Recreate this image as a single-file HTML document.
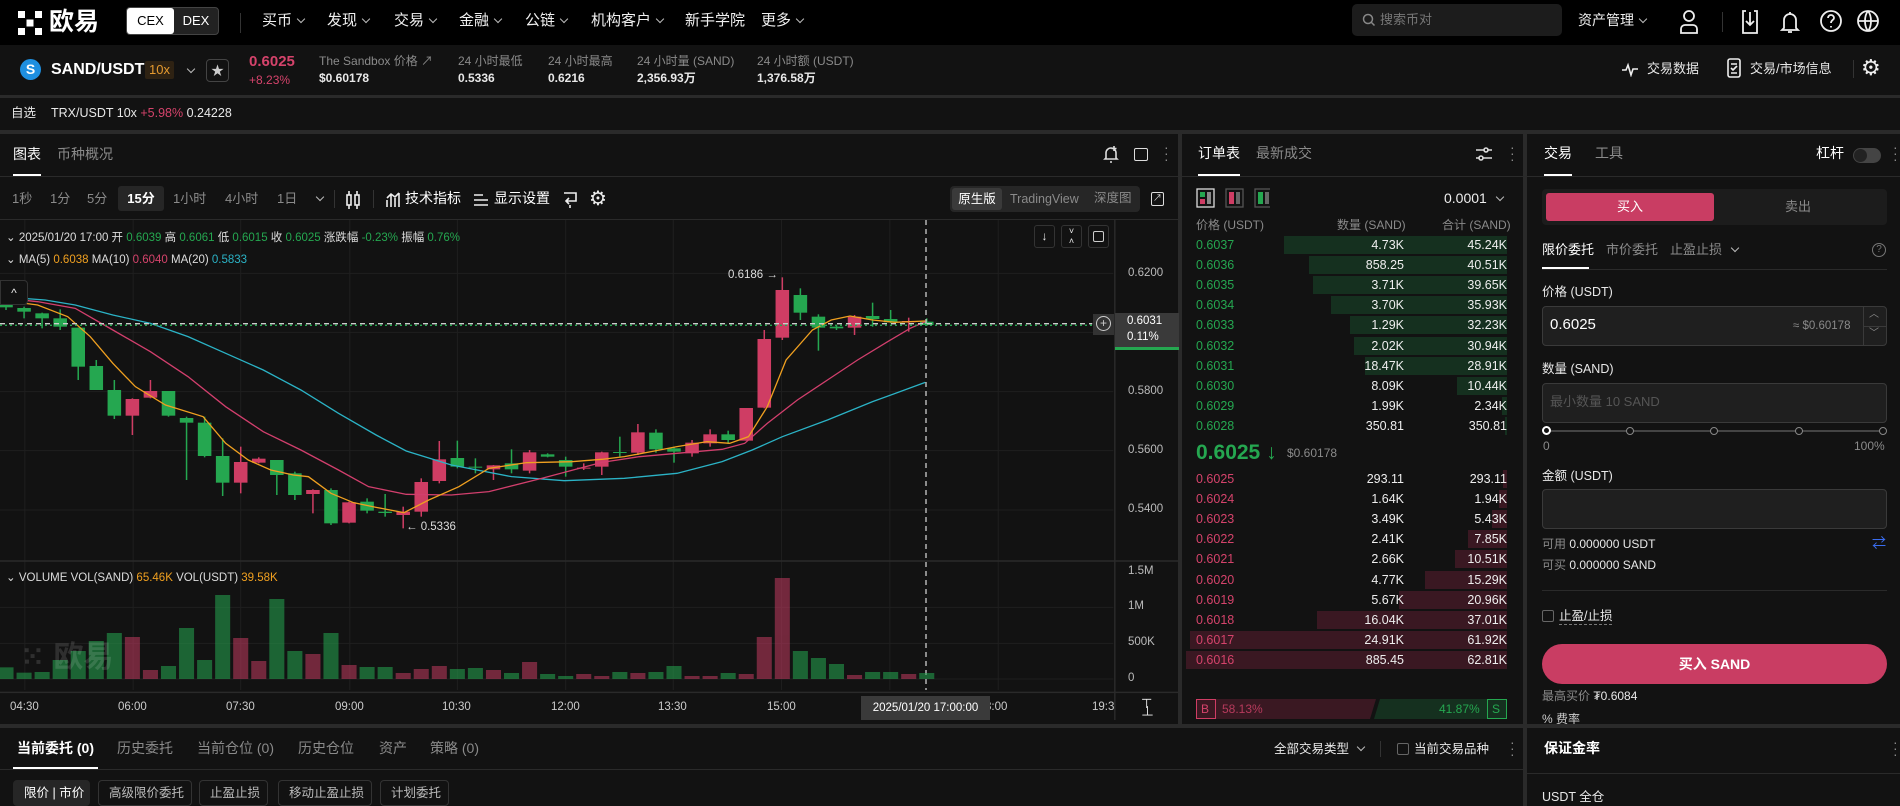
<!DOCTYPE html>
<html><head><meta charset="utf-8">
<style>
*{margin:0;padding:0;box-sizing:border-box}
body{width:1900px;height:806px;overflow:hidden;background:#121212;color:#e8e8e8;font-family:"Liberation Sans","Noto Sans CJK SC",sans-serif;font-size:12px;position:relative;line-height:1.2}
.a{position:absolute;white-space:nowrap}
.g{color:#8a8a8a}
.gr{color:#25a750}.rd{color:#d5436b}
.nav{left:0;top:0;width:1900px;height:45px;background:#000}
.ni{top:12px;font-size:15px;color:#f0f0f0}
.chev{display:inline-block;width:6px;height:6px;border-right:1.3px solid #bbb;border-bottom:1.3px solid #bbb;transform:rotate(45deg);margin-left:6px;position:relative;top:-3px}
.sep{background:#2a2a2a}
.ob{left:1180px;width:344px;height:18px}
.ob span{position:absolute;top:2px;font-size:12.5px}
.ob .p{left:16px}.ob .q{right:120px;color:#eee}.ob .t{right:17px;color:#eee}
.ob i{position:absolute;top:0;height:18px;right:17px}
.btn{top:780px;height:26px;border:1px solid #333;border-radius:4px;color:#bbb;font-size:12.5px;padding:5px 10px 0}
.inp{left:1542px;width:345px;height:40px;background:#1f1f1f;border:1px solid #3a3a3a;border-radius:4px}
</style></head><body>

<!-- NAV -->
<div class="a nav"></div>
<svg class="a" style="left:18px;top:11px" width="24" height="24" viewBox="0 0 24 24" fill="#fff"><rect x="0" y="0" width="7" height="7"/><rect x="17" y="0" width="7" height="7"/><rect x="8.5" y="8.5" width="7" height="7"/><rect x="0" y="17" width="7" height="7"/><rect x="17" y="17" width="7" height="7"/></svg>
<div class="a" style="left:49px;top:7px;font-size:25px;font-weight:bold;color:#fff">欧易</div>
<div class="a" style="left:126px;top:7px;width:93px;height:28px;border:1px solid #444;border-radius:4px;background:#222"></div>
<div class="a" style="left:127px;top:8px;width:47px;height:26px;background:#fff;border-radius:3px;color:#000;font-size:13px;text-align:center;line-height:26px">CEX</div>
<div class="a" style="left:174px;top:8px;width:44px;height:26px;color:#fff;font-size:13px;text-align:center;line-height:26px">DEX</div>
<div class="a" style="left:240px;top:13px;width:1px;height:20px;background:#333"></div>
<div class="a ni" style="left:262px">买币<span class="chev"></span></div>
<div class="a ni" style="left:327px">发现<span class="chev"></span></div>
<div class="a ni" style="left:394px">交易<span class="chev"></span></div>
<div class="a ni" style="left:459px">金融<span class="chev"></span></div>
<div class="a ni" style="left:525px">公链<span class="chev"></span></div>
<div class="a ni" style="left:591px">机构客户<span class="chev"></span></div>
<div class="a ni" style="left:685px">新手学院</div>
<div class="a ni" style="left:761px">更多<span class="chev"></span></div>
<div class="a" style="left:1352px;top:4px;width:210px;height:32px;background:#1c1c1c;border-radius:5px"></div>
<svg class="a" style="left:1362px;top:13px" width="14" height="14" viewBox="0 0 14 14" fill="none" stroke="#888" stroke-width="1.5"><circle cx="6" cy="6" r="4.5"/><path d="M9.5 9.5l3 3"/></svg>
<div class="a" style="left:1380px;top:12px;font-size:13px;color:#777">搜索币对</div>
<div class="a ni" style="left:1578px;font-size:14px">资产管理<span class="chev"></span></div>
<svg class="a" style="left:1678px;top:9px" width="22" height="26" viewBox="0 0 22 26" fill="none" stroke="#eee" stroke-width="1.8"><circle cx="11" cy="7" r="5"/><path d="M3 24v-4a4 4 0 014-4h8a4 4 0 014 4v4z"/></svg>
<div class="a" style="left:1722px;top:12px;width:1px;height:20px;background:#333"></div>
<svg class="a" style="left:1740px;top:9px" width="20" height="26" viewBox="0 0 20 26" fill="none" stroke="#eee" stroke-width="1.8"><path d="M6 2H3v22h14V2h-3M10 3v13M6 12l4 4 4-4"/></svg>
<svg class="a" style="left:1780px;top:9px" width="20" height="26" viewBox="0 0 20 26" fill="none" stroke="#eee" stroke-width="1.8"><path d="M4 19V11a6 6 0 0112 0v8l2 2H2zM8 23h4M10 3v2"/></svg>
<svg class="a" style="left:1819px;top:9px" width="24" height="24" viewBox="0 0 24 24" fill="none" stroke="#eee" stroke-width="1.8"><circle cx="12" cy="12" r="10"/><path d="M9 9a3 3 0 116 0c0 2-3 2-3 5M12 17v1.5"/></svg>
<svg class="a" style="left:1856px;top:9px" width="24" height="24" viewBox="0 0 24 24" fill="none" stroke="#eee" stroke-width="1.8"><circle cx="12" cy="12" r="10"/><path d="M2 12h20M12 2c-4 5-4 15 0 20M12 2c4 5 4 15 0 20"/></svg>

<!-- BAR 2 -->
<div class="a" style="left:20px;top:59px;width:21px;height:21px;border-radius:50%;background:#1e8fe0;color:#fff;font-weight:bold;font-size:14px;text-align:center;line-height:21px">S</div>
<div class="a" style="left:51px;top:60px;font-size:16px;font-weight:bold;color:#fff">SAND/USDT</div>
<div class="a" style="left:145px;top:61px;width:29px;height:18px;background:#2e2213;color:#e59a2f;font-size:13px;text-align:center;line-height:18px;border-radius:2px">10x</div>
<div class="a" style="left:182px;top:64px"><span class="chev"></span></div>
<div class="a" style="left:206px;top:59px;width:23px;height:23px;border:1px solid #444;border-radius:4px;color:#ccc;text-align:center;line-height:21px;font-size:13px">★</div>
<div class="a rd" style="left:249px;top:53px;font-size:15px;font-weight:bold">0.6025</div>
<div class="a rd" style="left:249px;top:73px;font-size:12px">+8.23%</div>
<div class="a g" style="left:319px;top:54px">The Sandbox 价格 ↗</div>
<div class="a" style="left:319px;top:71px;font-weight:bold">$0.60178</div>
<div class="a g" style="left:458px;top:54px">24 小时最低</div>
<div class="a" style="left:458px;top:71px;font-weight:bold">0.5336</div>
<div class="a g" style="left:548px;top:54px">24 小时最高</div>
<div class="a" style="left:548px;top:71px;font-weight:bold">0.6216</div>
<div class="a g" style="left:637px;top:54px">24 小时量 (SAND)</div>
<div class="a" style="left:637px;top:71px;font-weight:bold">2,356.93万</div>
<div class="a g" style="left:757px;top:54px">24 小时额 (USDT)</div>
<div class="a" style="left:757px;top:71px;font-weight:bold">1,376.58万</div>
<svg class="a" style="left:1622px;top:61px" width="18" height="16" viewBox="0 0 18 16" fill="none" stroke="#eee" stroke-width="1.6"><path d="M0 9h4l2-5 3 10 2-6h5"/></svg>
<div class="a" style="left:1647px;top:61px;font-size:13px">交易数据</div>
<svg class="a" style="left:1727px;top:58px" width="14" height="20" viewBox="0 0 14 20" fill="none" stroke="#eee" stroke-width="1.6"><rect x="1" y="1" width="12" height="18" rx="2"/><path d="M4 6h6M4 10l2 2 4-4M4 15h6"/></svg>
<div class="a" style="left:1750px;top:61px;font-size:13px">交易/市场信息</div>
<div class="a" style="left:1853px;top:60px;width:1px;height:18px;background:#333"></div>
<div class="a" style="left:1861px;top:55px;font-size:22px;color:#eee">⚙</div>
<div class="a sep" style="left:0;top:95px;width:1900px;height:3px"></div>
<div class="a" style="left:11px;top:106px;font-size:12.5px">自选</div>
<div class="a" style="left:51px;top:106px;font-size:12.5px">TRX/USDT 10x <span class="rd">+5.98%</span> 0.24228</div>
<div class="a sep" style="left:0;top:130px;width:1900px;height:4px"></div>

<div class="a sep" style="left:1178px;top:130px;width:4px;height:596px"></div>
<div class="a sep" style="left:1523px;top:130px;width:4px;height:676px"></div>

<!-- CHART HEADER -->
<div class="a" style="left:13px;top:146px;font-size:14px;color:#fff">图表</div>
<div class="a g" style="left:57px;top:146px;font-size:14px">币种概况</div>
<div class="a" style="left:13px;top:174px;width:28px;height:2px;background:#fff"></div>
<div class="a sep" style="left:0;top:176px;width:1178px;height:1px"></div>
<svg class="a" style="left:1103px;top:145px" width="16" height="18" viewBox="0 0 16 18" fill="none" stroke="#ddd" stroke-width="1.6"><path d="M3 13V8a5 5 0 0110 0v5l1 1H2zM7 17h2M11 1v5M8.5 3.5h5"/></svg>
<div class="a" style="left:1134px;top:148px;width:14px;height:13px;border:1.6px solid #ddd;border-radius:2px"></div>
<div class="a g" style="left:1164px;top:144px;font-size:14px;line-height:6px">·<br>·<br>·</div>
<div class="a g" style="left:12px;top:191px;font-size:13px">1秒</div>
<div class="a g" style="left:50px;top:191px;font-size:13px">1分</div>
<div class="a g" style="left:87px;top:191px;font-size:13px">5分</div>
<div class="a" style="left:118px;top:186px;width:46px;height:25px;background:#262626;border-radius:3px;color:#fff;font-size:13px;text-align:center;line-height:25px;font-weight:bold">15分</div>
<div class="a g" style="left:173px;top:191px;font-size:13px">1小时</div>
<div class="a g" style="left:225px;top:191px;font-size:13px">4小时</div>
<div class="a g" style="left:277px;top:191px;font-size:13px">1日</div>
<div class="a" style="left:311px;top:192px"><span class="chev"></span></div>
<div class="a" style="left:334px;top:190px;width:1px;height:18px;background:#333"></div>
<svg class="a" style="left:346px;top:190px" width="14" height="20" viewBox="0 0 14 20" fill="none" stroke="#eee" stroke-width="1.6"><rect x="1" y="5" width="4" height="10"/><rect x="9" y="5" width="4" height="10"/><path d="M3 1v4M3 15v4M11 1v4M11 15v4"/></svg>
<div class="a" style="left:373px;top:190px;width:1px;height:18px;background:#333"></div>
<svg class="a" style="left:386px;top:192px" width="14" height="16" viewBox="0 0 14 16" fill="none" stroke="#eee" stroke-width="1.6"><path d="M1 15V8M5 15V3M9 15V6M13 15V1M1 6l4-4 4 3 4-4"/></svg>
<div class="a" style="left:405px;top:190px;font-size:14px;color:#fff">技术指标</div>
<svg class="a" style="left:474px;top:193px" width="14" height="14" viewBox="0 0 14 14" fill="none" stroke="#eee" stroke-width="1.6"><path d="M0 2h9M0 7h14M0 12h14"/></svg>
<div class="a" style="left:494px;top:190px;font-size:14px;color:#fff">显示设置</div>
<svg class="a" style="left:563px;top:191px" width="14" height="18" viewBox="0 0 14 18" fill="none" stroke="#eee" stroke-width="1.6"><path d="M1 2h12v8H4M6 7l-3 3 3 3M7 14v3"/></svg>
<div class="a" style="left:589px;top:187px;font-size:20px;color:#eee">⚙</div>
<div class="a" style="left:950px;top:186px;width:190px;height:26px;background:#262626;border-radius:4px"></div>
<div class="a" style="left:952px;top:188px;width:50px;height:22px;background:#3a3a3a;border-radius:3px;color:#fff;font-size:12.5px;text-align:center;line-height:22px">原生版</div>
<div class="a g" style="left:1010px;top:192px;font-size:12.5px">TradingView</div>
<div class="a g" style="left:1094px;top:191px;font-size:12.5px">深度图</div>
<div class="a" style="left:1151px;top:192px;width:13px;height:14px;border:1.6px solid #ddd;border-radius:2px;font-size:9px;line-height:10px;text-align:center;color:#ddd">↗</div>
<div class="a sep" style="left:0;top:219px;width:1178px;height:1px"></div>

<!-- CHART SVG -->
<svg class="a" style="left:0;top:220px" width="1178" height="500" viewBox="0 0 1566 1500" preserveAspectRatio="none">
<g stroke="#1f1f1f" stroke-width="1">
<path vector-effect="non-scaling-stroke" d="M33 0V1410M177 0V1410M320 0V1410M465 0V1410M608 0V1410M752 0V1410M895 0V1410M1039 0V1410M1183 0V1410M1327 0V1410"/>
<path vector-effect="non-scaling-stroke" d="M0 160H1480M0 337H1480M0 515H1480M0 692H1480M0 870H1480M0 1162H1480M0 1270H1480M0 1377H1480"/>
</g>
<path d="M0 1023H1566M1482 0V1500M0 1417H1566" stroke="#2a2a2a" stroke-width="1.5" vector-effect="non-scaling-stroke"/>
<g fill="#25a750">
<rect x="7" y="230" width="2" height="40"/><rect x="-1" y="240" width="18" height="22"/>
<rect x="31" y="260" width="2" height="35"/><rect x="23" y="264" width="18" height="11"/>
<rect x="55" y="278" width="2" height="47"/><rect x="47" y="280" width="18" height="15"/>
<rect x="79" y="268" width="2" height="62"/><rect x="71" y="295" width="18" height="25"/>
<rect x="103" y="323" width="2" height="157"/><rect x="95" y="323" width="18" height="117"/>
<rect x="127" y="420" width="2" height="90"/><rect x="119" y="438" width="18" height="72"/>
<rect x="151" y="480" width="2" height="117"/><rect x="143" y="510" width="18" height="77"/>
<rect x="223" y="513" width="2" height="77"/><rect x="215" y="513" width="18" height="74"/>
<rect x="247" y="590" width="2" height="190"/><rect x="239" y="594" width="18" height="14"/>
<rect x="271" y="590" width="2" height="122"/><rect x="263" y="608" width="18" height="100"/>
<rect x="295" y="655" width="2" height="173"/><rect x="287" y="708" width="18" height="80"/>
<rect x="367" y="720" width="2" height="105"/><rect x="359" y="720" width="18" height="45"/>
<rect x="391" y="755" width="2" height="85"/><rect x="383" y="760" width="18" height="65"/>
<rect x="439" y="805" width="2" height="110"/><rect x="431" y="810" width="18" height="100"/>
<rect x="487" y="835" width="2" height="45"/><rect x="479" y="845" width="18" height="27"/>
<rect x="511" y="822" width="2" height="68"/><rect x="503" y="875" width="18" height="4"/>
<rect x="607" y="662" width="2" height="83"/><rect x="599" y="714" width="18" height="26"/>
<rect x="631" y="715" width="2" height="45"/><rect x="623" y="740" width="18" height="3"/>
<rect x="679" y="688" width="2" height="72"/><rect x="671" y="730" width="18" height="18"/>
<rect x="727" y="700" width="2" height="12"/><rect x="719" y="703" width="18" height="7"/>
<rect x="751" y="710" width="2" height="60"/><rect x="743" y="720" width="18" height="20"/>
<rect x="823" y="650" width="2" height="60"/><rect x="815" y="696" width="18" height="3"/>
<rect x="871" y="628" width="2" height="70"/><rect x="863" y="638" width="18" height="50"/>
<rect x="895" y="680" width="2" height="48"/><rect x="887" y="685" width="18" height="10"/>
<rect x="967" y="632" width="2" height="40"/><rect x="959" y="643" width="18" height="17"/>
<rect x="1063" y="205" width="2" height="95"/><rect x="1055" y="225" width="18" height="53"/>
<rect x="1087" y="283" width="2" height="109"/><rect x="1079" y="290" width="18" height="33"/>
<rect x="1111" y="315" width="2" height="15"/><rect x="1103" y="320" width="18" height="5"/>
<rect x="1159" y="248" width="2" height="72"/><rect x="1151" y="288" width="18" height="9"/>
<rect x="1183" y="270" width="2" height="40"/><rect x="1175" y="297" width="18" height="10"/>
<rect x="1231" y="295" width="2" height="23"/><rect x="1223" y="305" width="18" height="10"/>
</g>
<g fill="#cf3d64">
<rect x="175" y="535" width="2" height="110"/><rect x="167" y="537" width="18" height="50"/>
<rect x="199" y="480" width="2" height="55"/><rect x="191" y="513" width="18" height="20"/>
<rect x="319" y="680" width="2" height="140"/><rect x="311" y="726" width="18" height="62"/>
<rect x="343" y="712" width="2" height="18"/><rect x="335" y="716" width="18" height="12"/>
<rect x="415" y="808" width="2" height="72"/><rect x="407" y="810" width="18" height="12"/>
<rect x="463" y="845" width="2" height="65"/><rect x="455" y="847" width="18" height="61"/>
<rect x="535" y="860" width="2" height="65"/><rect x="527" y="875" width="18" height="10"/>
<rect x="559" y="775" width="2" height="115"/><rect x="551" y="786" width="18" height="89"/>
<rect x="583" y="663" width="2" height="127"/><rect x="575" y="718" width="18" height="65"/>
<rect x="655" y="735" width="2" height="45"/><rect x="647" y="736" width="18" height="12"/>
<rect x="703" y="690" width="2" height="70"/><rect x="695" y="697" width="18" height="55"/>
<rect x="775" y="730" width="2" height="20"/><rect x="767" y="743" width="18" height="3"/>
<rect x="799" y="695" width="2" height="70"/><rect x="791" y="697" width="18" height="43"/>
<rect x="847" y="612" width="2" height="93"/><rect x="839" y="637" width="18" height="61"/>
<rect x="919" y="660" width="2" height="50"/><rect x="911" y="668" width="18" height="32"/>
<rect x="943" y="628" width="2" height="52"/><rect x="935" y="643" width="18" height="27"/>
<rect x="991" y="564" width="2" height="98"/><rect x="983" y="564" width="18" height="98"/>
<rect x="1015" y="330" width="2" height="235"/><rect x="1007" y="357" width="18" height="206"/>
<rect x="1039" y="172" width="2" height="188"/><rect x="1031" y="210" width="18" height="143"/>
<rect x="1135" y="285" width="2" height="60"/><rect x="1127" y="290" width="18" height="33"/>
<rect x="1207" y="293" width="2" height="42"/><rect x="1199" y="303" width="18" height="4"/>
</g>
<g fill="none" stroke-width="1.3">
<polyline vector-effect="non-scaling-stroke" stroke="#2bb3c6" points="0,230 60,240 100,255 150,285 200,310 250,350 300,400 350,450 400,510 450,580 500,645 540,693 600,735 680,770 750,782 830,775 900,760 960,725 1000,690 1040,650 1100,600 1160,545 1230,487"/>
<polyline vector-effect="non-scaling-stroke" stroke="#d23f6d" points="0,233 50,245 100,265 150,330 200,395 250,470 300,560 350,635 400,690 450,750 490,800 540,823 600,825 650,815 720,775 800,727 850,710 900,700 960,688 990,670 1020,610 1060,540 1100,480 1140,420 1180,365 1210,325 1230,305"/>
<polyline vector-effect="non-scaling-stroke" stroke="#f0a020" points="0,240 50,255 90,290 120,350 150,430 180,500 220,555 270,590 300,670 330,720 360,750 390,765 410,770 440,820 470,848 500,862 537,878 570,840 610,800 650,745 700,728 760,725 800,718 830,710 870,693 900,680 940,665 970,670 995,650 1020,560 1045,420 1080,330 1105,300 1130,288 1160,300 1190,307 1230,303"/>
<path vector-effect="non-scaling-stroke" stroke="#ccc" stroke-dasharray="5 4" d="M0 311H1452M1231 0V1410"/>
<path vector-effect="non-scaling-stroke" stroke="#25a750" stroke-dasharray="2 3" d="M0 316H1452"/>
</g>
<g opacity="0.55">
<g fill="#25a750">
<rect x="-2" y="1342" width="20" height="35"/><rect x="22" y="1358" width="20" height="19"/><rect x="46" y="1356" width="20" height="21"/><rect x="70" y="1320" width="20" height="57"/><rect x="94" y="1293" width="20" height="84"/><rect x="118" y="1263" width="20" height="114"/><rect x="142" y="1239" width="20" height="138"/><rect x="214" y="1338" width="20" height="39"/><rect x="238" y="1224" width="20" height="153"/><rect x="262" y="1320" width="20" height="57"/><rect x="286" y="1125" width="20" height="252"/><rect x="358" y="1137" width="20" height="240"/><rect x="382" y="1293" width="20" height="84"/><rect x="430" y="1239" width="20" height="138"/><rect x="478" y="1341" width="20" height="36"/><rect x="502" y="1341" width="20" height="36"/><rect x="598" y="1347" width="20" height="30"/><rect x="622" y="1344" width="20" height="33"/><rect x="670" y="1359" width="20" height="18"/><rect x="718" y="1362" width="20" height="15"/><rect x="742" y="1368" width="20" height="9"/><rect x="814" y="1356" width="20" height="21"/><rect x="862" y="1356" width="20" height="21"/><rect x="886" y="1338" width="20" height="39"/><rect x="958" y="1359" width="20" height="18"/><rect x="1054" y="1293" width="20" height="84"/><rect x="1078" y="1314" width="20" height="63"/><rect x="1102" y="1332" width="20" height="45"/><rect x="1150" y="1356" width="20" height="21"/><rect x="1174" y="1356" width="20" height="21"/><rect x="1222" y="1359" width="20" height="18"/>
</g>
<g fill="#c23a60">
<rect x="166" y="1251" width="20" height="126"/><rect x="190" y="1350" width="20" height="27"/><rect x="310" y="1254" width="20" height="123"/><rect x="334" y="1323" width="20" height="54"/><rect x="406" y="1302" width="20" height="75"/><rect x="454" y="1335" width="20" height="42"/><rect x="526" y="1359" width="20" height="18"/><rect x="550" y="1347" width="20" height="30"/><rect x="574" y="1338" width="20" height="39"/><rect x="646" y="1350" width="20" height="27"/><rect x="694" y="1326" width="20" height="51"/><rect x="766" y="1362" width="20" height="15"/><rect x="790" y="1368" width="20" height="9"/><rect x="838" y="1359" width="20" height="18"/><rect x="910" y="1368" width="20" height="9"/><rect x="934" y="1368" width="20" height="9"/><rect x="982" y="1362" width="20" height="15"/><rect x="1006" y="1251" width="20" height="126"/><rect x="1030" y="1074" width="20" height="303"/><rect x="1126" y="1365" width="20" height="12"/><rect x="1198" y="1362" width="20" height="15"/>
</g></g>
</svg>
<div class="a" style="left:6px;top:232px;font-size:11.5px;color:#ddd">⌄ 2025/01/20 17:00 开 <span class="gr">0.6039</span> 高 <span class="gr">0.6061</span> 低 <span class="gr">0.6015</span> 收 <span class="gr">0.6025</span> 涨跌幅 <span class="gr">-0.23%</span> 振幅 <span class="gr">0.76%</span></div>
<div class="a" style="left:6px;top:254px;font-size:11.5px;color:#ddd">⌄ MA(5) <span style="color:#f0a020">0.6038</span> MA(10) <span class="rd">0.6040</span> MA(20) <span style="color:#2bb3c6">0.5833</span></div>
<div class="a" style="left:1034px;top:225px;width:21px;height:23px;border:1px solid #333;border-radius:3px;text-align:center;font-size:12px;line-height:21px">↓</div>
<div class="a" style="left:1061px;top:225px;width:21px;height:23px;border:1px solid #333;border-radius:3px;text-align:center;font-size:9px;line-height:10px">˅<br>˄</div>
<div class="a" style="left:1088px;top:225px;width:21px;height:23px;border:1px solid #333;border-radius:3px"></div>
<div class="a" style="left:1093px;top:231px;width:11px;height:11px;border:1.4px solid #ccc;border-radius:2px"></div>
<div class="a" style="left:0;top:280px;width:28px;height:25px;border:1px solid #333;border-radius:0 4px 4px 0;background:#121212;text-align:center;font-size:12px;line-height:25px">^</div>
<div class="a" style="left:728px;top:269px;font-size:11.5px;color:#ddd">0.6186 →</div>
<div class="a" style="left:406px;top:521px;font-size:11.5px;color:#ddd">← 0.5336</div>
<div class="a" style="left:1128px;top:267px;font-size:11.5px;color:#bbb">0.6200</div>
<div class="a" style="left:1128px;top:385px;font-size:11.5px;color:#bbb">0.5800</div>
<div class="a" style="left:1128px;top:444px;font-size:11.5px;color:#bbb">0.5600</div>
<div class="a" style="left:1128px;top:503px;font-size:11.5px;color:#bbb">0.5400</div>
<div class="a" style="left:1093px;top:314px;width:21px;height:21px;background:#333"></div>
<div class="a" style="left:1096px;top:316px;width:15px;height:15px;border:1.3px solid #ccc;border-radius:50%;text-align:center;font-size:12px;line-height:12px;color:#ccc">+</div>
<div class="a" style="left:1115px;top:313px;width:64px;height:36px;background:#3a3a3a"></div>
<div class="a" style="left:1115px;top:347px;width:64px;height:3px;background:#25a750"></div>
<div class="a" style="left:1127px;top:315px;font-size:11.5px;color:#fff">0.6031</div>
<div class="a" style="left:1127px;top:331px;font-size:11.5px;color:#fff">0.11%</div>
<div class="a" style="left:6px;top:572px;font-size:11.5px;color:#ddd">⌄ VOLUME VOL(SAND) <span style="color:#f0a020">65.46K</span> VOL(USDT) <span style="color:#f0a020">39.58K</span></div>
<div class="a" style="left:20px;top:640px;font-size:30px;font-weight:bold;color:#fff;opacity:.12">⁙ 欧易</div>
<div class="a" style="left:1128px;top:565px;font-size:11.5px;color:#bbb">1.5M</div>
<div class="a" style="left:1128px;top:600px;font-size:11.5px;color:#bbb">1M</div>
<div class="a" style="left:1128px;top:636px;font-size:11.5px;color:#bbb">500K</div>
<div class="a" style="left:1128px;top:672px;font-size:11.5px;color:#bbb">0</div>
<div class="a" style="left:10px;top:701px;font-size:11.5px;color:#ccc">04:30</div>
<div class="a" style="left:118px;top:701px;font-size:11.5px;color:#ccc">06:00</div>
<div class="a" style="left:226px;top:701px;font-size:11.5px;color:#ccc">07:30</div>
<div class="a" style="left:335px;top:701px;font-size:11.5px;color:#ccc">09:00</div>
<div class="a" style="left:442px;top:701px;font-size:11.5px;color:#ccc">10:30</div>
<div class="a" style="left:551px;top:701px;font-size:11.5px;color:#ccc">12:00</div>
<div class="a" style="left:658px;top:701px;font-size:11.5px;color:#ccc">13:30</div>
<div class="a" style="left:767px;top:701px;font-size:11.5px;color:#ccc">15:00</div>
<div class="a" style="left:985px;top:701px;font-size:11.5px;color:#ccc">8:00</div>
<div class="a" style="left:1092px;top:701px;font-size:11.5px;color:#ccc">19:3</div>
<div class="a" style="left:861px;top:696px;width:129px;height:24px;background:#3a3a3a;color:#fff;font-size:11.5px;text-align:center;line-height:24px">2025/01/20 17:00:00</div>
<div class="a" style="left:1141px;top:700px;font-size:13px;color:#eee;line-height:8px">⊤<br>⊥</div>

<!-- ORDERBOOK -->
<div class="a" style="left:1198px;top:145px;font-size:14px;color:#fff">订单表</div>
<div class="a g" style="left:1256px;top:145px;font-size:14px">最新成交</div>
<div class="a" style="left:1198px;top:174px;width:42px;height:2px;background:#fff"></div>
<div class="a sep" style="left:1182px;top:176px;width:341px;height:1px"></div>
<svg class="a" style="left:1476px;top:146px" width="16" height="16" viewBox="0 0 16 16" fill="none" stroke="#ddd" stroke-width="1.6"><path d="M0 4h16M0 12h16"/><circle cx="10" cy="4" r="2" fill="#121212"/><circle cx="5" cy="12" r="2" fill="#121212"/></svg>
<div class="a g" style="left:1510px;top:144px;font-size:14px;line-height:6px">·<br>·<br>·</div>
<svg class="a" style="left:1196px;top:188px" width="74" height="20" viewBox="0 0 74 20"><rect x="1" y="1" width="17" height="18" fill="none" stroke="#ddd" stroke-width="1.3"/><rect x="4" y="4" width="5" height="5" fill="#25a750"/><rect x="4" y="11" width="5" height="5" fill="#cf3d64"/><rect x="11" y="4" width="4" height="12" fill="#888"/><rect x="30" y="1" width="17" height="18" fill="none" stroke="#555" stroke-width="1.3"/><rect x="33" y="4" width="5" height="12" fill="#cf3d64"/><rect x="40" y="4" width="4" height="12" fill="#666"/><rect x="59" y="1" width="17" height="18" fill="none" stroke="#555" stroke-width="1.3"/><rect x="62" y="4" width="5" height="12" fill="#25a750"/><rect x="69" y="4" width="4" height="12" fill="#666"/></svg>
<div class="a" style="left:1444px;top:190px;font-size:14px;color:#eee">0.0001 <span class="chev"></span></div>
<div class="a g" style="left:1196px;top:218px;font-size:12px">价格 (USDT)</div>
<div class="a g" style="left:1337px;top:218px;font-size:12px">数量 (SAND)</div>
<div class="a g" style="left:1442px;top:218px;font-size:12px">合计 (SAND)</div>

<div class="a ob" style="top:236px"><i style="left:104px;background:#15301f"></i><span class="p gr">0.6037</span><span class="q">4.73K</span><span class="t">45.24K</span></div>
<div class="a ob" style="top:256px"><i style="left:129px;background:#15301f"></i><span class="p gr">0.6036</span><span class="q">858.25</span><span class="t">40.51K</span></div>
<div class="a ob" style="top:276px"><i style="left:133px;background:#15301f"></i><span class="p gr">0.6035</span><span class="q">3.71K</span><span class="t">39.65K</span></div>
<div class="a ob" style="top:296px"><i style="left:151px;background:#15301f"></i><span class="p gr">0.6034</span><span class="q">3.70K</span><span class="t">35.93K</span></div>
<div class="a ob" style="top:316px"><i style="left:170px;background:#15301f"></i><span class="p gr">0.6033</span><span class="q">1.29K</span><span class="t">32.23K</span></div>
<div class="a ob" style="top:337px"><i style="left:174px;background:#15301f"></i><span class="p gr">0.6032</span><span class="q">2.02K</span><span class="t">30.94K</span></div>
<div class="a ob" style="top:357px"><i style="left:185px;background:#15301f"></i><span class="p gr">0.6031</span><span class="q">18.47K</span><span class="t">28.91K</span></div>
<div class="a ob" style="top:377px"><i style="left:277px;background:#15301f"></i><span class="p gr">0.6030</span><span class="q">8.09K</span><span class="t">10.44K</span></div>
<div class="a ob" style="top:397px"><i style="left:322px;background:#15301f"></i><span class="p gr">0.6029</span><span class="q">1.99K</span><span class="t">2.34K</span></div>
<div class="a ob" style="top:417px"><i style="left:325px;background:#15301f"></i><span class="p gr">0.6028</span><span class="q">350.81</span><span class="t">350.81</span></div>
<div class="a gr" style="left:1196px;top:440px;font-size:21px;font-weight:bold">0.6025 ↓</div>
<div class="a g" style="left:1287px;top:446px;font-size:12px">$0.60178</div>
<div class="a ob" style="top:470px"><i style="left:323px;background:#3a1822"></i><span class="p rd">0.6025</span><span class="q">293.11</span><span class="t">293.11</span></div>
<div class="a ob" style="top:490px"><i style="left:319px;background:#3a1822"></i><span class="p rd">0.6024</span><span class="q">1.64K</span><span class="t">1.94K</span></div>
<div class="a ob" style="top:510px"><i style="left:312px;background:#3a1822"></i><span class="p rd">0.6023</span><span class="q">3.49K</span><span class="t">5.43K</span></div>
<div class="a ob" style="top:530px"><i style="left:288px;background:#3a1822"></i><span class="p rd">0.6022</span><span class="q">2.41K</span><span class="t">7.85K</span></div>
<div class="a ob" style="top:550px"><i style="left:275px;background:#3a1822"></i><span class="p rd">0.6021</span><span class="q">2.66K</span><span class="t">10.51K</span></div>
<div class="a ob" style="top:571px"><i style="left:245px;background:#3a1822"></i><span class="p rd">0.6020</span><span class="q">4.77K</span><span class="t">15.29K</span></div>
<div class="a ob" style="top:591px"><i style="left:219px;background:#3a1822"></i><span class="p rd">0.6019</span><span class="q">5.67K</span><span class="t">20.96K</span></div>
<div class="a ob" style="top:611px"><i style="left:137px;background:#3a1822"></i><span class="p rd">0.6018</span><span class="q">16.04K</span><span class="t">37.01K</span></div>
<div class="a ob" style="top:631px"><i style="left:10px;background:#3a1822"></i><span class="p rd">0.6017</span><span class="q">24.91K</span><span class="t">61.92K</span></div>
<div class="a ob" style="top:651px"><i style="left:6px;background:#3a1822"></i><span class="p rd">0.6016</span><span class="q">885.45</span><span class="t">62.81K</span></div>
<svg class="a" style="left:1196px;top:699px" width="311" height="20" viewBox="0 0 311 20"><polygon points="0,0 180,0 174,20 0,20" fill="#3a1822"/><polygon points="184,0 311,0 311,20 178,20" fill="#15301f"/><rect x="0.5" y="0.5" width="19" height="19" fill="none" stroke="#cf3d64"/><rect x="291.5" y="0.5" width="19" height="19" fill="none" stroke="#25a750"/></svg>
<div class="a rd" style="left:1201px;top:702px;font-size:12px">B</div>
<div class="a rd" style="left:1222px;top:702px;font-size:12px;opacity:.8">58.13%</div>
<div class="a gr" style="left:1439px;top:702px;font-size:12px">41.87%</div>
<div class="a gr" style="left:1492px;top:702px;font-size:12px">S</div>

<!-- TRADE PANEL -->
<div class="a" style="left:1544px;top:145px;font-size:14px;color:#fff">交易</div>
<div class="a g" style="left:1595px;top:145px;font-size:14px">工具</div>
<div class="a" style="left:1544px;top:174px;width:28px;height:2px;background:#fff"></div>
<div class="a sep" style="left:1527px;top:176px;width:373px;height:1px"></div>
<div class="a" style="left:1816px;top:145px;font-size:14px;color:#fff">杠杆</div>
<div class="a" style="left:1853px;top:148px;width:28px;height:15px;border-radius:8px;background:#444"></div>
<div class="a" style="left:1854px;top:149px;width:13px;height:13px;border-radius:50%;background:#222"></div>
<div class="a g" style="left:1893px;top:144px;font-size:14px;line-height:6px">·<br>·<br>·</div>
<div class="a" style="left:1542px;top:189px;width:345px;height:36px;background:#1c1c1c;border-radius:4px"></div>
<div class="a" style="left:1546px;top:193px;width:168px;height:28px;background:#c93d63;border-radius:3px;color:#fff;text-align:center;line-height:28px;font-size:13px">买入</div>
<div class="a g" style="left:1785px;top:199px;font-size:13px">卖出</div>
<div class="a" style="left:1542px;top:242px;font-size:13px;color:#fff">限价委托</div>
<div class="a g" style="left:1606px;top:242px;font-size:13px">市价委托</div>
<div class="a g" style="left:1670px;top:242px;font-size:13px">止盈止损 <span class="chev"></span></div>
<div class="a" style="left:1872px;top:243px;width:14px;height:14px;border:1.2px solid #777;border-radius:50%;color:#777;font-size:10px;text-align:center;line-height:12px">?</div>
<div class="a" style="left:1542px;top:267px;width:47px;height:2px;background:#fff"></div>
<div class="a sep" style="left:1542px;top:269px;width:345px;height:1px"></div>
<div class="a" style="left:1542px;top:285px;font-size:12.5px">价格 (USDT)</div>
<div class="a inp" style="top:306px"></div>
<div class="a" style="left:1550px;top:316px;font-size:15px;color:#fff">0.6025</div>
<div class="a g" style="left:1793px;top:320px;font-size:11.5px">≈ $0.60178</div>
<div class="a" style="left:1863px;top:307px;width:1px;height:38px;background:#3a3a3a"></div>
<div class="a" style="left:1863px;top:326px;width:23px;height:1px;background:#3a3a3a"></div>
<div class="a g" style="left:1869px;top:309px;font-size:10px">︿</div>
<div class="a g" style="left:1869px;top:328px;font-size:10px">﹀</div>
<div class="a" style="left:1542px;top:362px;font-size:12.5px">数量 (SAND)</div>
<div class="a inp" style="top:383px"></div>
<div class="a" style="left:1550px;top:394px;font-size:13px;color:#555">最小数量 10 SAND</div>
<div class="a" style="left:1546px;top:430px;width:338px;height:1.5px;background:#444"></div>
<div class="a" style="left:1542px;top:426px;width:9px;height:9px;border:2px solid #fff;border-radius:50%;background:#121212"></div>
<div class="a" style="left:1626px;top:427px;width:8px;height:8px;border:1.3px solid #888;border-radius:50%;background:#121212"></div>
<div class="a" style="left:1710px;top:427px;width:8px;height:8px;border:1.3px solid #888;border-radius:50%;background:#121212"></div>
<div class="a" style="left:1795px;top:427px;width:8px;height:8px;border:1.3px solid #888;border-radius:50%;background:#121212"></div>
<div class="a" style="left:1879px;top:427px;width:8px;height:8px;border:1.3px solid #888;border-radius:50%;background:#121212"></div>
<div class="a g" style="left:1543px;top:439px;font-size:12px">0</div>
<div class="a g" style="left:1854px;top:439px;font-size:12px">100%</div>
<div class="a" style="left:1542px;top:469px;font-size:12.5px">金额 (USDT)</div>
<div class="a inp" style="top:489px"></div>
<div class="a" style="left:1542px;top:537px;font-size:12px"><span class="g">可用</span> 0.000000 USDT</div>
<div class="a" style="left:1542px;top:558px;font-size:12px"><span class="g">可买</span> 0.000000 SAND</div>
<div class="a" style="left:1872px;top:535px;font-size:14px;color:#3a6df0">⇄</div>
<div class="a sep" style="left:1542px;top:590px;width:345px;height:1px"></div>
<div class="a" style="left:1542px;top:610px;width:12px;height:12px;border:1px solid #666;border-radius:2px"></div>
<div class="a" style="left:1559px;top:609px;font-size:12.5px;border-bottom:1px dashed #777">止盈/止损</div>
<div class="a" style="left:1542px;top:644px;width:345px;height:40px;background:#c93d63;border-radius:20px;color:#fff;text-align:center;line-height:40px;font-size:14px;font-weight:bold">买入 SAND</div>
<div class="a" style="left:1542px;top:689px;font-size:12px"><span class="g">最高买价</span> ₮0.6084</div>
<div class="a" style="left:1542px;top:712px;font-size:12px;color:#ccc">% 费率</div>

<!-- BOTTOM -->
<div class="a sep" style="left:0;top:724px;width:1900px;height:4px"></div>
<div class="a" style="left:0;top:728px;width:1523px;height:78px;background:#121212"></div>
<div class="a" style="left:1527px;top:728px;width:373px;height:78px;background:#121212"></div>
<div class="a" style="left:17px;top:740px;font-size:14px;color:#fff;font-weight:bold">当前委托 (0)</div>
<div class="a g" style="left:117px;top:740px;font-size:14px">历史委托</div>
<div class="a g" style="left:197px;top:740px;font-size:14px">当前仓位 (0)</div>
<div class="a g" style="left:298px;top:740px;font-size:14px">历史仓位</div>
<div class="a g" style="left:379px;top:740px;font-size:14px">资产</div>
<div class="a g" style="left:430px;top:740px;font-size:14px">策略 (0)</div>
<div class="a" style="left:13px;top:767px;width:85px;height:2px;background:#fff"></div>
<div class="a sep" style="left:0;top:769px;width:1523px;height:1px"></div>
<div class="a" style="left:1274px;top:742px;font-size:12.5px">全部交易类型 <span class="chev"></span></div>
<div class="a" style="left:1380px;top:741px;width:1px;height:16px;background:#333"></div>
<div class="a" style="left:1397px;top:743px;width:12px;height:12px;border:1px solid #666;border-radius:2px"></div>
<div class="a" style="left:1414px;top:742px;font-size:12.5px">当前交易品种</div>
<div class="a g" style="left:1510px;top:739px;font-size:14px;line-height:6px">·<br>·<br>·</div>
<div class="a btn" style="left:13px;width:77px;background:#262626;color:#fff;border-color:#262626">限价 | 市价</div>
<div class="a btn" style="left:98px;width:94px">高级限价委托</div>
<div class="a btn" style="left:199px;width:69px">止盈止损</div>
<div class="a btn" style="left:278px;width:94px">移动止盈止损</div>
<div class="a btn" style="left:380px;width:69px">计划委托</div>
<div class="a" style="left:1544px;top:740px;font-size:14px;color:#fff;font-weight:bold">保证金率</div>
<div class="a g" style="left:1893px;top:739px;font-size:14px;line-height:6px">·<br>·<br>·</div>
<div class="a sep" style="left:1527px;top:773px;width:373px;height:1px"></div>
<div class="a" style="left:1542px;top:790px;font-size:12.5px">USDT 全仓</div>
</body></html>
